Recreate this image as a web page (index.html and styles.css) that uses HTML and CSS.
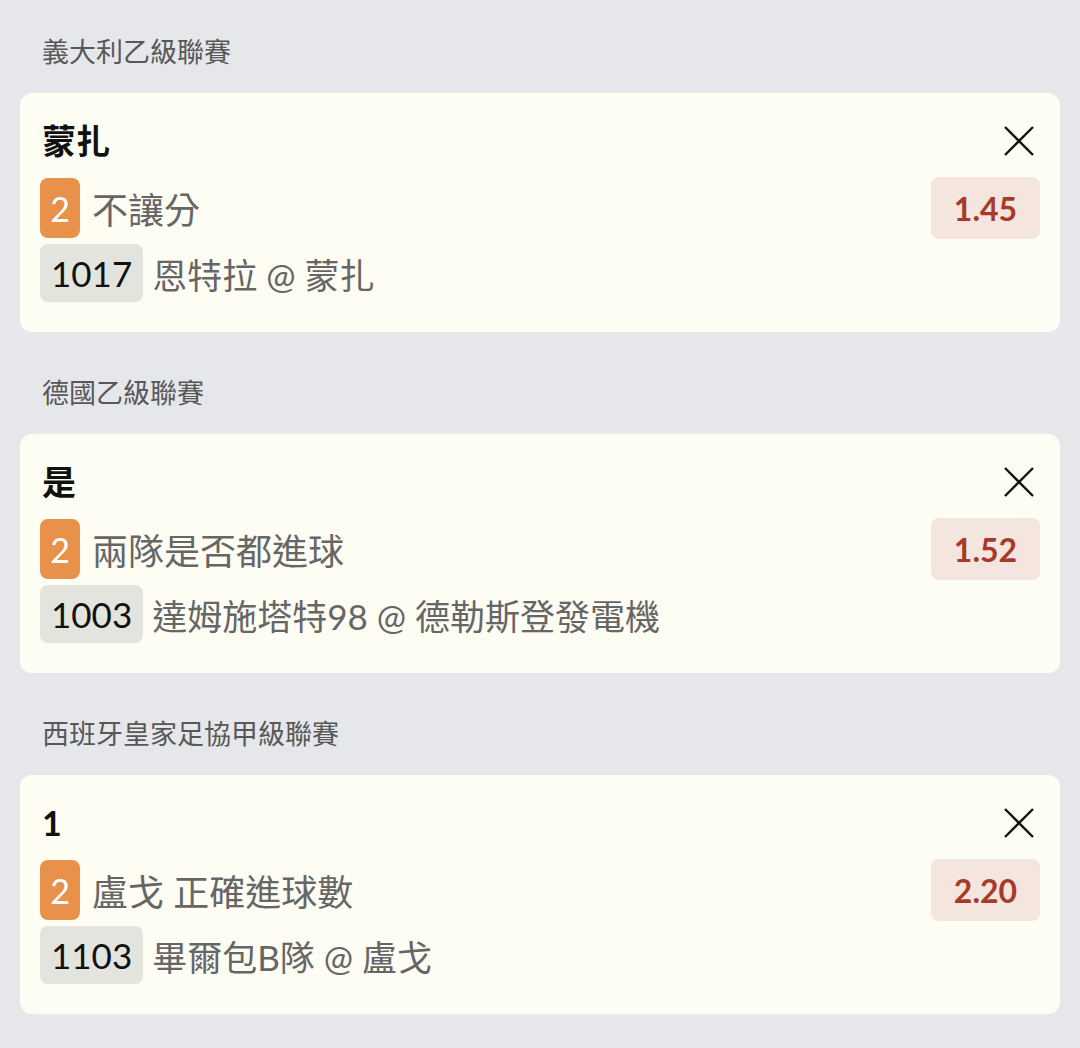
FILE: index.html
```html
<!DOCTYPE html>
<html lang="zh-Hant">
  <head>
    <meta charset="UTF-8" />
    <title>投注單</title>
    <link rel="stylesheet" href="styles.css">
  </head>
  <body>
    <div class="league">
      <div class="league-name">義大利乙級聯賽</div>
      <div class="bet-card">
        <div class="row">
          <div class="selection">蒙扎</div>
          <button class="close-btn" aria-label="移除">
            <svg width="32" height="32" viewBox="0 0 32 32"><path d="M2 2 L30 30 M30 2 L2 30" stroke="#111" stroke-width="2.4" fill="none" /></svg>
          </button>
        </div>
        <div class="row row-market">
          <div class="market">
            <span class="badge-num">2</span>
            <span class="market-name">不讓分</span>
          </div>
          <div class="odds">1.45</div>
        </div>
        <div class="row row-match">
          <span class="match-code">1017</span>
          <span class="match-name">恩特拉 @ 蒙扎</span>
        </div>
      </div>
    </div>

    <div class="league">
      <div class="league-name">德國乙級聯賽</div>
      <div class="bet-card">
        <div class="row">
          <div class="selection">是</div>
          <button class="close-btn" aria-label="移除">
            <svg width="32" height="32" viewBox="0 0 32 32"><path d="M2 2 L30 30 M30 2 L2 30" stroke="#111" stroke-width="2.4" fill="none" /></svg>
          </button>
        </div>
        <div class="row row-market">
          <div class="market">
            <span class="badge-num">2</span>
            <span class="market-name">兩隊是否都進球</span>
          </div>
          <div class="odds">1.52</div>
        </div>
        <div class="row row-match">
          <span class="match-code">1003</span>
          <span class="match-name">達姆施塔特98 @ 德勒斯登發電機</span>
        </div>
      </div>
    </div>

    <div class="league">
      <div class="league-name">西班牙皇家足協甲級聯賽</div>
      <div class="bet-card">
        <div class="row">
          <div class="selection">1</div>
          <button class="close-btn" aria-label="移除">
            <svg width="32" height="32" viewBox="0 0 32 32"><path d="M2 2 L30 30 M30 2 L2 30" stroke="#111" stroke-width="2.4" fill="none" /></svg>
          </button>
        </div>
        <div class="row row-market">
          <div class="market">
            <span class="badge-num">2</span>
            <span class="market-name">盧戈 正確進球數</span>
          </div>
          <div class="odds">2.20</div>
        </div>
        <div class="row row-match">
          <span class="match-code">1103</span>
          <span class="match-name">畢爾包B隊 @ 盧戈</span>
        </div>
      </div>
    </div>
  </body>
</html>
```

FILE: styles.css
```css
body {
  font-family: Lato, "Noto Sans CJK TC", sans-serif;
  background-color: #e6e7ea;
  margin: 0;
  padding: 34px 20px 0;
}

.league {
  margin-bottom: 43px;
}

.league-name {
  height: 36px;
  line-height: 36px;
  font-size: 27px;
  color: #585858;
  padding-left: 22px;
  margin-bottom: 23px;
}

.bet-card {
  background: #fdfdf4;
  border-radius: 12px;
  padding: 28px 20px 30px 20px;
}

.row {
  display: flex;
  align-items: center;
  justify-content: space-between;
}

.selection {
  font-size: 34px;
  font-weight: 700;
  line-height: 40px;
  color: #111;
  padding-left: 2px;
}

.close-btn {
  background: none;
  border: none;
  padding: 0;
  margin-right: 5px;
  width: 32px;
  height: 32px;
  cursor: pointer;
}

.row-market {
  height: 60px;
  margin-top: 17px;
}

.market {
  display: flex;
  align-items: center;
  gap: 12px;
}

.badge-num {
  width: 40px;
  height: 60px;
  border-radius: 8px;
  background-color: #e8914a;
  color: white;
  font-size: 34px;
  display: flex;
  align-items: center;
  justify-content: center;
}

.market-name {
  font-size: 36px;
  color: #666;
}

.match-name {
  font-size: 35px;
  color: #666;
}

.odds {
  width: 109px;
  height: 62px;
  box-sizing: border-box;
  border-radius: 8px;
  background-color: #f4e5df;
  color: #a63a2b;
  font-size: 32px;
  font-weight: 700;
  display: flex;
  align-items: center;
  justify-content: center;
}

.row-match {
  justify-content: flex-start;
  gap: 9px;
  margin-top: 6px;
}

.match-code {
  height: 58px;
  padding: 0 11px;
  border-radius: 8px;
  background-color: #e4e4de;
  color: #111;
  font-size: 35px;
  display: flex;
  align-items: center;
}
```
